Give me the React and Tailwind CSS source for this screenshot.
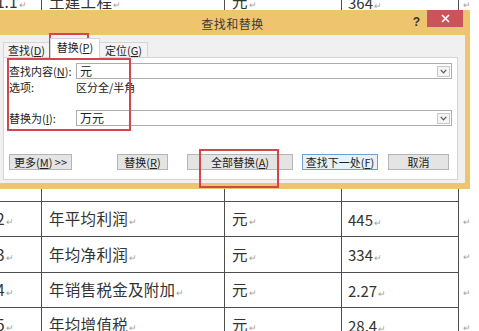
import React from "react";

function Mark({ className = "" }) {
  return <span className={"text-[9px] text-[#a0a0a0] ml-[1px] " + className}>↵</span>;
}

const rows = [
  { h: "h-[35px]", a: "1.1", b: "土建工程", c: "元", d: "364" },
  { h: "h-[182px]", spacer: true },
  { h: "h-[35px]", a: "2", b: "年平均利润", c: "元", d: "445" },
  { h: "h-[36px]", a: "3", b: "年均净利润", c: "元", d: "334" },
  { h: "h-[35px]", a: "4", b: "年销售税金及附加", c: "元", d: "2.27" },
  { h: "h-[35px]", a: "5", b: "年均增值税", c: "元", d: "28.4" },
];

function Chevron() {
  return (
    <div className="w-[13px] h-[11px] border border-[#c9c9c9] bg-[#f4f4f4] flex items-center justify-center">
      <svg width="7" height="5" viewBox="0 0 7 5">
        <path d="M0.8 0.8 L3.5 3.8 L6.2 0.8" fill="none" stroke="#555" strokeWidth="1.2" />
      </svg>
    </div>
  );
}

function Btn({ w, children, focus }) {
  return (
    <div
      className={
        "h-[16px] flex items-center justify-center text-[11px] leading-none shrink-0 border " +
        w +
        (focus ? " border-[#6f9fcf] bg-[#e5f1fb]" : " border-[#b5b5b5] bg-[#e4e4e4]")
      }
    >
      {children}
    </div>
  );
}

export default function App() {
  return (
    <div className="relative w-[479px] h-[331px] overflow-hidden bg-white font-['Noto_Sans_CJK_SC','Noto_Sans',sans-serif] text-[#333]">
      {/* document table */}
      <div className="-ml-[10px] -mt-[15px] grid grid-cols-[52px_183px_117px_117px_20px] text-[15.5px] leading-none">
        {rows.map((r, i) => (
          <React.Fragment key={i}>
            <div className={r.h + " border-r border-b border-[#4f4f4f] flex items-center pl-[6px]"}>
              {!r.spacer && (
                <span>
                  {r.a}
                  <Mark />
                </span>
              )}
            </div>
            <div className={r.h + " border-r border-b border-[#4f4f4f] flex items-center pl-[7px]"}>
              {!r.spacer && (
                <span className="tracking-[0.3px]">
                  {r.b}
                  <Mark />
                </span>
              )}
            </div>
            <div className={r.h + " border-r border-b border-[#4f4f4f] flex items-center pl-[7px]"}>
              {!r.spacer && (
                <span>
                  {r.c}
                  <Mark />
                </span>
              )}
            </div>
            <div className={r.h + " border-r border-b border-[#4f4f4f] flex items-center pl-[6px]"}>
              {!r.spacer && (
                <span className="text-[15px]">
                  {r.d}
                  <Mark />
                </span>
              )}
            </div>
            <div className={r.h + " flex items-center pl-[3px] pt-[3px]"}>
              {!r.spacer && <Mark />}
            </div>
          </React.Fragment>
        ))}
      </div>

      {/* dialog */}
      <div className="absolute left-[-5px] top-[10px] w-[475px] h-[179px] bg-[#efc46f] flex flex-col text-[#222]">
        <div className="h-[25px] shrink-0 flex items-start">
          <div className="w-[63px]" />
          <div className="flex-1 flex justify-center pt-[5px]">
            <span className="text-[12px] tracking-[0.5px] text-[#3a3a3a]">查找和替换</span>
          </div>
          <div className="w-[63px] flex items-start justify-end pr-[7px]">
            <span className="text-[12px] font-bold text-[#333] mt-[3px] mr-[7px] font-['Liberation_Sans',sans-serif]">?</span>
            <div className="w-[36px] h-[17px] bg-[#c9545a] flex items-center justify-center">
              <svg width="9" height="9" viewBox="0 0 9 9">
                <path d="M1 1 L8 8 M8 1 L1 8" stroke="#fff" strokeWidth="1.6" />
              </svg>
            </div>
          </div>
        </div>

        <div className="mx-[5px] mb-[6px] flex-1 bg-[#f0f0f0] flex flex-col pl-[3px] pr-[7px] pb-[3px]">
          {/* tabs */}
          <div className="h-[22px] shrink-0 flex items-end text-[11px] leading-none">
            <div className="w-[47px] h-[15px] border border-b-0 border-[#d5d5d5] bg-[#f3f3f3] flex items-center justify-center">
              查找(<span className="underline">D</span>)
            </div>
            <div className="w-[50px] h-[20px] border border-b-0 border-[#d5d5d5] bg-white flex items-center justify-center relative z-10 -mb-[1px] pb-[2px]">
              替换(<span className="underline">P</span>)
            </div>
            <div className="w-[48px] h-[15px] border border-b-0 border-l-0 border-[#d5d5d5] bg-[#f3f3f3] flex items-center justify-center">
              定位(<span className="underline">G</span>)
            </div>
          </div>

          {/* panel */}
          <div className="flex-1 border border-[#d5d5d5] bg-white flex flex-col pt-[5px] pl-[5px] pr-[5px] text-[11px] leading-none">
            <div className="flex items-center h-[16px]">
              <div className="w-[67px]">
                查找内容(<span className="underline">N</span>):
              </div>
              <div className="flex-1 h-[16px] border border-[#abadb3] flex items-center justify-between pl-[3px] pr-[1px]">
                <span className="text-[12px]">元</span>
                <Chevron />
              </div>
            </div>
            <div className="flex items-center h-[16px]">
              <div className="w-[67px]">选项:</div>
              <div>区分全/半角</div>
            </div>
            <div className="flex items-center h-[16px] mt-[15px]">
              <div className="w-[67px]">
                替换为(<span className="underline">I</span>):
              </div>
              <div className="flex-1 h-[16px] border border-[#abadb3] flex items-center justify-between pl-[3px] pr-[1px]">
                <span className="text-[12px]">万元</span>
                <Chevron />
              </div>
            </div>
            <div className="flex items-center mt-[28px]">
              <Btn w="w-[63px]">
                更多(<span className="underline">M</span>) &gt;&gt;
              </Btn>
              <div className="w-[45px] shrink-0" />
              <Btn w="w-[51px]">
                替换(<span className="underline">R</span>)
              </Btn>
              <div className="w-[19px] shrink-0" />
              <Btn w="w-[106px]">
                全部替换(<span className="underline">A</span>)
              </Btn>
              <div className="w-[9px] shrink-0" />
              <Btn w="w-[76px]" focus>
                查找下一处(<span className="underline">F</span>)
              </Btn>
              <div className="w-[10px] shrink-0" />
              <Btn w="w-[61px]">取消</Btn>
            </div>
          </div>
        </div>
      </div>

      {/* red annotation boxes */}
      <div className="absolute left-[7px] top-[58px] w-[124px] h-[73px] border-2 border-[#d4464e]" />
      <div className="absolute left-[49px] top-[33px] w-[40px] h-[25px] border-2 border-[#d4464e]" />
      <div className="absolute left-[199px] top-[149px] w-[80px] h-[39px] border-2 border-[#d4464e]" />
    </div>
  );
}
